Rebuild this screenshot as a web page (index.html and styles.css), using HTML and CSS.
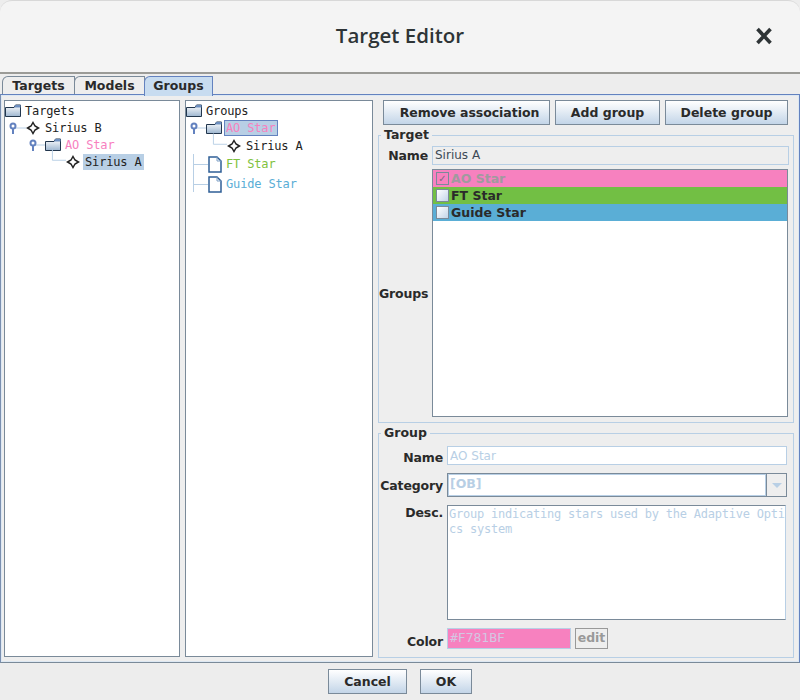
FILE: index.html
```html
<!DOCTYPE html>
<html lang="en">
<head>
    <meta charset="UTF-8">
    <meta name="viewport" content="width=device-width, initial-scale=1.0">
    <title>Target Editor</title>
    <link rel="stylesheet" href="styles.css">
</head>
<body>
    <svg class="defs" width="0" height="0">
        <defs>
            <linearGradient id="folder-fill" x1="0" y1="0" x2="0" y2="1">
                <stop offset="0" stop-color="#ffffff"/>
                <stop offset="1" stop-color="#9db6d0"/>
            </linearGradient>
            <symbol id="folder" viewBox="0 0 16 13">
                <path d="M0.5 3.5H9L10.5 1H15.5V12.5H0.5Z" fill="url(#folder-fill)" stroke="#22364d"/>
                <path d="M10.5 1H15.5V3.5H9Z" fill="#6d8fc0"/>
            </symbol>
            <symbol id="star" viewBox="0 0 14 14">
                <path d="M7 1.5L9 5L12.5 7L9 9L7 12.5L5 9L1.5 7L5 5Z" fill="#fff" stroke="#222" stroke-width="1.5"/>
            </symbol>
            <symbol id="doc" viewBox="0 0 14 17">
                <path d="M1 1H9L13 5V16H1Z" fill="#fff" stroke="#2f5f96" stroke-width="1.5"/>
                <path d="M9 1V5H13" fill="none" stroke="#7fa0c6"/>
            </symbol>
            <symbol id="handle" viewBox="0 0 18 12">
                <path d="M5 6H18" stroke="#b8cfe5"/>
                <path d="M5 6V12" stroke="#6382bf" stroke-width="2"/>
                <circle cx="5" cy="4" r="2.5" fill="#fff" stroke="#6382bf" stroke-width="2"/>
            </symbol>
            <symbol id="elbow" viewBox="0 0 16 16">
                <path d="M1.5 0V11.5H16" fill="none" stroke="#b8cfe5"/>
            </symbol>
        </defs>
    </svg>

    <div class="window">
        <header class="titlebar">
            <h1>Target Editor</h1>
            <svg class="close" width="18" height="18" viewBox="0 0 18 18">
                <path d="M2.5 2L15.5 16M15.5 2L2.5 16" stroke="#2e3436" stroke-width="3.6"/>
            </svg>
        </header>

        <div class="tabs">
            <div class="tab tab-targets">Targets</div>
            <div class="tab tab-models">Models</div>
            <div class="tab tab-groups active">Groups</div>
        </div>

        <main class="panel">
            <div class="tree tree-targets">
                <div class="row"><svg class="ico-folder"><use href="#folder"/></svg><span>Targets</span></div>
                <div class="row indent-1"><svg class="ico-handle"><use href="#handle"/></svg><svg class="ico-star"><use href="#star"/></svg><span>Sirius B</span></div>
                <div class="row indent-2"><svg class="ico-handle"><use href="#handle"/></svg><svg class="ico-folder"><use href="#folder"/></svg><span class="pink">AO Star</span></div>
                <div class="row indent-3"><svg class="ico-elbow"><use href="#elbow"/></svg><svg class="ico-star"><use href="#star"/></svg><span class="selected">Sirius A</span></div>
            </div>

            <div class="tree tree-groups">
                <div class="row"><svg class="ico-folder"><use href="#folder"/></svg><span>Groups</span></div>
                <div class="row indent-1"><svg class="ico-handle"><use href="#handle"/></svg><svg class="ico-folder"><use href="#folder"/></svg><span class="pink selected focused">AO Star</span></div>
                <div class="row indent-4"><svg class="ico-elbow"><use href="#elbow"/></svg><svg class="ico-star"><use href="#star"/></svg><span>Sirius A</span></div>
                <div class="branch">
                    <div class="row leaf"><svg class="ico-doc"><use href="#doc"/></svg><span class="green">FT Star</span></div>
                    <div class="row leaf"><svg class="ico-doc"><use href="#doc"/></svg><span class="blue">Guide Star</span></div>
                </div>
            </div>

            <div class="side">
                <div class="toolbar">
                    <button class="btn btn-remove">Remove association</button>
                    <button class="btn btn-add">Add group</button>
                    <button class="btn btn-delete">Delete group</button>
                </div>

                <fieldset class="box box-target">
                    <legend>Target</legend>
                    <div class="form-row">
                        <label class="lbl-target">Name</label>
                        <div class="field field-gray">Sirius A</div>
                    </div>
                    <div class="form-row form-row-list">
                        <label class="lbl-target">Groups</label>
                        <div class="list">
                            <div class="item item-pink disabled"><span class="check checked">&#10003;</span>AO Star</div>
                            <div class="item item-green"><span class="check"></span>FT Star</div>
                            <div class="item item-blue"><span class="check"></span>Guide Star</div>
                        </div>
                    </div>
                </fieldset>

                <fieldset class="box box-group">
                    <legend>Group</legend>
                    <div class="form-row row-name">
                        <label class="lbl-group">Name</label>
                        <div class="field field-white">AO Star</div>
                    </div>
                    <div class="form-row row-category">
                        <label class="lbl-group">Category</label>
                        <div class="combo">
                            <div class="combo-value">[OB]</div>
                            <div class="combo-arrow"><span></span></div>
                        </div>
                    </div>
                    <div class="form-row row-desc">
                        <label class="lbl-group">Desc.</label>
                        <div class="desc">Group indicating stars used by the Adaptive Optics system</div>
                    </div>
                    <div class="form-row row-color">
                        <label class="lbl-group">Color</label>
                        <div class="color-value">#F781BF</div>
                        <div class="edit">edit</div>
                    </div>
                </fieldset>
            </div>
        </main>

        <footer class="actions">
            <button class="btn btn-cancel">Cancel</button>
            <button class="btn btn-ok">OK</button>
        </footer>
    </div>
</body>
</html>
```

FILE: styles.css
```css
body {
    margin: 0;
    background-color: #ededed;
    font-family: "DejaVu Sans", sans-serif;
    color: #2a2a2a;
}

.defs {
    display: block;
    height: 0;
}

.window {
    width: 800px;
    height: 700px;
    display: flex;
    flex-direction: column;
    overflow: hidden;
    background-color: #ededed;
}

/* title bar */
.titlebar {
    height: 68px;
    padding-bottom: 3px;
    flex: none;
    display: flex;
    align-items: center;
    justify-content: center;
    position: relative;
    background-color: #f4f4f4;
    border-top: 1px solid #d8d8d8;
    border-bottom: 2px solid #9b9b97;
    border-radius: 12px 12px 0 0;
}

.titlebar h1 {
    margin: 0;
    font-family: "Open Sans", sans-serif;
    font-size: 20.5px;
    font-weight: 600;
    color: #2e3436;
}

.close {
    position: absolute;
    right: 27px;
    top: 26px;
}

/* tabs */
.tabs {
    height: 18px;
    flex: none;
    display: flex;
    padding: 2px 0 0 2px;
}

.tab {
    box-sizing: border-box;
    height: 19px;
    font-size: 12.5px;
    font-weight: bold;
    line-height: 18px;
    text-align: center;
    background-color: #eeeeee;
    border: 1px solid #7a8a99;
    border-bottom: none;
    border-top-left-radius: 6px;
    margin-left: -1px;
}

.tab:first-child {
    margin-left: 0;
}

.tab-targets { width: 73px; }
.tab-models { width: 71px; }
.tab-groups { width: 69px; }

.tab.active {
    height: 20px;
    background-color: #c8dcf0;
    border-color: #6382bf;
    position: relative;
    z-index: 1;
}

/* main panel */
.panel {
    flex: none;
    height: 569px;
    box-sizing: border-box;
    display: flex;
    gap: 5px;
    padding: 5px 2px 3px 3px;
    background-color: #eeeeee;
    border: 1px solid #6382bf;
    border-bottom-color: #7a8a99;
    border-left-color: #7a8fb0;
    box-shadow: inset 0 0 0 1px #dde8f3;
}

.tree {
    flex: none;
    box-sizing: border-box;
    height: 557px;
    background-color: #fff;
    border: 1px solid #7a8a99;
    font-family: "DejaVu Sans Mono", monospace;
    font-size: 12px;
    letter-spacing: -0.15px;
    color: #222;
    padding: 1px 0 0 0;
}

.tree-targets {
    width: 176px;
}

.tree-groups {
    width: 188px;
}

.row {
    height: 17px;
    display: flex;
    align-items: center;
    white-space: nowrap;
}

.row svg {
    flex: none;
}

.indent-1 { margin-left: 3px; }
.indent-2 { margin-left: 23px; }
.indent-3 { margin-left: 46px; }
.indent-4 { margin-left: 26px; margin-top: 1px; }

.ico-folder {
    width: 16px;
    height: 13px;
    margin-right: 4px;
}

.ico-star {
    width: 14px;
    height: 14px;
    margin-right: 5px;
}

.ico-doc {
    width: 14px;
    height: 17px;
    margin-right: 4px;
}

.ico-handle {
    width: 18px;
    height: 12px;
}

.ico-handle + .ico-folder {
    margin-left: -1px;
}

.ico-elbow {
    width: 15px;
    height: 16px;
    margin-top: -10px;
}

.pink { color: #f781bf; }
.green { color: #7fc241; }
.blue { color: #5aaed6; }

.selected {
    background-color: #b8cfe5;
    padding: 0 2px;
    margin-left: -2px;
    line-height: 16px;
}

.focused {
    outline: 1px solid #6382bf;
    outline-offset: -1px;
}

.branch {
    margin-left: 7px;
    border-left: 1px solid #b8cfe5;
    height: 38px;
}

.leaf {
    height: 20px;
}

.leaf::before {
    content: "";
    width: 14px;
    border-top: 1px solid #b8cfe5;
    flex: none;
}

/* right side */
.side {
    flex: 1;
    min-width: 0;
    display: flex;
    flex-direction: column;
}

.toolbar {
    display: flex;
    gap: 5px;
    padding-left: 5px;
    height: 25px;
}

.btn {
    height: 25px;
    padding: 0;
    font-family: "DejaVu Sans", sans-serif;
    font-size: 12.5px;
    font-weight: bold;
    color: #2a2a2a;
    background: linear-gradient(#ffffff, #c3d5e8);
    border: 1px solid #7a8a99;
}

.btn-remove { width: 167px; padding-left: 6px; letter-spacing: -0.05px; }
.btn-add { width: 105px; }
.btn-delete { width: 123px; }
.btn-cancel { width: 79px; }
.btn-ok { width: 52px; }

.box {
    margin: 0;
    padding: 0;
    min-width: 0;
    border: 1px solid #b8cfe5;
    width: 416px;
    box-sizing: border-box;
    display: flex;
    flex-direction: column;
}

.box legend {
    margin-left: 2px;
    padding: 0 3px;
    font-size: 12.5px;
    font-weight: bold;
    line-height: 16px;
}

.box-target {
    height: 296px;
    margin-top: 2px;
    padding-top: 3px;
}

.box-group {
    height: 233px;
    margin-top: 2px;
    padding-top: 5px;
}

.form-row {
    display: flex;
    align-items: center;
    gap: 4px;
}

label {
    flex: none;
    font-size: 12.5px;
    font-weight: bold;
    letter-spacing: -0.15px;
    text-align: right;
}

.lbl-target { width: 49px; }
.lbl-group { width: 64px; position: relative; }

.row-name .lbl-group { top: 2px; }

.field {
    box-sizing: border-box;
    font-size: 12px;
    padding-left: 2px;
    border: 1px solid #b8cfe5;
    height: 19px;
    line-height: 17px;
}

.field-gray {
    width: 357px;
    color: #3c4a55;
    background-color: #eeeeee;
}

.field-white {
    width: 340px;
    line-height: 18px;
    color: #b8cfe5;
    background-color: #fff;
}

.form-row-list {
    margin-top: 4px;
    height: 248px;
}

.list {
    box-sizing: border-box;
    width: 356px;
    height: 248px;
    background-color: #fff;
    border: 1px solid #7a8a99;
}

.item {
    height: 17px;
    display: flex;
    align-items: center;
    font-size: 12.5px;
    font-weight: bold;
    line-height: 17px;
    padding-left: 3px;
}

.item-pink { background-color: #f781bf; }
.item-green { background-color: #72bf44; }
.item-blue { background-color: #5aaed6; }

.disabled {
    color: #a09a9e;
}

.check {
    box-sizing: border-box;
    width: 13px;
    height: 13px;
    margin-right: 2px;
    border: 1px solid #7a8a99;
    background: linear-gradient(135deg, #ffffff, #c3d5e8);
    font-size: 10px;
    line-height: 11px;
    text-align: center;
}

.check.checked {
    background: none;
    color: #806a80;
}

.row-category {
    margin-top: 8px;
}

.combo {
    box-sizing: border-box;
    width: 340px;
    height: 24px;
    display: flex;
    border: 1px solid #7a8a99;
}

.combo-value {
    flex: 1;
    background-color: #fff;
    color: #b8cfe5;
    font-size: 12.5px;
    font-weight: bold;
    line-height: 20px;
    padding-left: 2px;
    border-right: 1px solid #7a8a99;
    box-shadow: inset 0 0 0 1px #b8cfe5;
}

.combo-arrow {
    width: 19px;
    display: flex;
    align-items: center;
    justify-content: center;
    background-color: #eeeeee;
}

.combo-arrow span {
    border-left: 5px solid transparent;
    border-right: 5px solid transparent;
    border-top: 5px solid #b8cfe5;
}

.row-desc {
    margin-top: 8px;
    align-items: flex-start;
}

.desc {
    box-sizing: border-box;
    width: 339px;
    height: 115px;
    background-color: #fff;
    border: 1px solid #7a8a99;
    border-right-color: #b8cfe5;
    padding: 1px 0 0 1px;
    font-family: "DejaVu Sans Mono", monospace;
    font-size: 12px;
    letter-spacing: -0.23px;
    line-height: 15px;
    color: #b8cfe5;
    word-break: break-all;
}

.row-color {
    margin-top: 8px;
    align-items: flex-end;
}

.color-value {
    box-sizing: border-box;
    width: 124px;
    height: 21px;
    background-color: #f781bf;
    border: 1px solid #b8cfe5;
    padding-left: 2px;
    font-family: "DejaVu Sans Mono", monospace;
    font-size: 13px;
    line-height: 18px;
    color: #d4c6e2;
}

.edit {
    box-sizing: border-box;
    width: 33px;
    height: 21px;
    border: 1px solid #999;
    color: #999;
    font-size: 12.5px;
    font-weight: bold;
    line-height: 18px;
    text-align: center;
}

/* bottom buttons */
.actions {
    flex: 1;
    display: flex;
    justify-content: center;
    align-items: flex-start;
    gap: 13px;
    padding-top: 6px;
}
```
